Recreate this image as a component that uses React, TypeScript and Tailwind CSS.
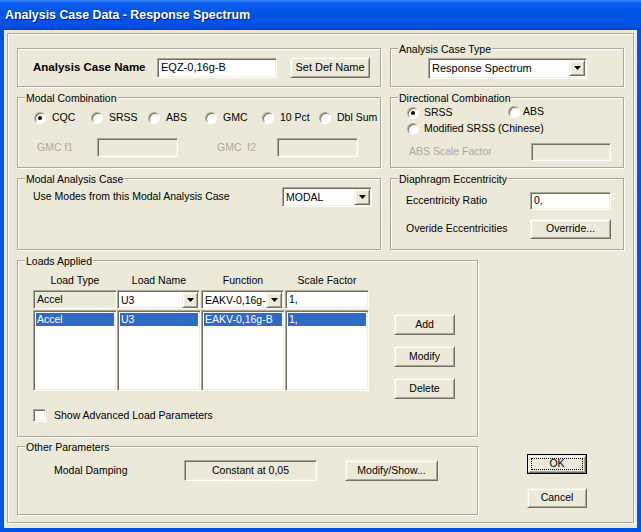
import type { ReactNode } from "react";

const sunken =
  "border border-[#ACA899] border-b-white border-r-white shadow-[inset_1px_1px_0_#716F64,inset_-1px_-1px_0_#F1EFE2]";
const raised =
  "border border-[#F1EFE2] border-b-[#716F64] border-r-[#716F64] shadow-[inset_1px_1px_0_#fff,inset_-1px_-1px_0_#ACA899]";
const etched = "border border-[#ACA899] shadow-[inset_1px_1px_0_#fff,1px_1px_0_#fff]";

function Group({ title, className, children }: { title?: string; className: string; children: ReactNode }) {
  return (
    <div className={`relative ${etched} ${className}`}>
      {title && (
        <span className="absolute left-[7px] top-[-7px] bg-[#ECE9D8] px-[1px] leading-[14px]">{title}</span>
      )}
      {children}
    </div>
  );
}

function Arrow() {
  return (
    <svg width="7" height="4" viewBox="0 0 7 4">
      <polygon points="0,0 7,0 3.5,4" fill="#000" />
    </svg>
  );
}

function Combo({ value, className }: { value: string; className: string }) {
  return (
    <div className={`flex items-center bg-white ${sunken} ${className}`}>
      <span className="flex-1 overflow-hidden whitespace-nowrap pl-[3px] leading-[14px]">{value}</span>
      <span className={`mr-[1px] flex h-[16px] w-[16px] shrink-0 items-center justify-center bg-[#ECE9D8] ${raised}`}>
        <Arrow />
      </span>
    </div>
  );
}

function Field({ value = "", disabled, className }: { value?: string; disabled?: boolean; className: string }) {
  return (
    <div
      className={`flex items-center overflow-hidden whitespace-nowrap pl-[3px] ${sunken} ${
        disabled ? "bg-[#ECE9D8]" : "bg-white"
      } ${className}`}
    >
      {value}
    </div>
  );
}

function Button({ label, className }: { label: string; className: string }) {
  return (
    <div className={`flex items-center justify-center bg-[#ECE9D8] ${raised} ${className}`}>{label}</div>
  );
}

function Radio({ checked }: { checked?: boolean }) {
  return (
    <span className="flex h-[12px] w-[12px] shrink-0 items-center justify-center rounded-full border border-[#ACA899] border-b-white border-r-white bg-white shadow-[inset_1px_1px_0_#716F64]">
      {checked && <span className="h-[4px] w-[4px] rounded-full bg-black" />}
    </span>
  );
}

const modalOptions = ["CQC", "SRSS", "ABS", "GMC", "10 Pct", "Dbl Sum"];

const loadColumns = [
  { head: "Load Type", row: "Accel" },
  { head: "Load Name", row: "U3" },
  { head: "Function", row: "EAKV-0,16g-B" },
  { head: "Scale Factor", row: "1," },
];

export default function App() {
  return (
    <div className="flex h-[532px] w-[641px] flex-col bg-[#0054E3] font-['Liberation_Sans',Arial,sans-serif] text-[10.5px] text-black">
      <div className="flex h-[30px] shrink-0 items-center bg-[linear-gradient(to_bottom,#3D8CF7_0%,#0A5CEE_10%,#0055E5_45%,#0052E0_85%,#0046D2_100%)] pl-[5px]">
        <span className="text-[12.4px] font-bold text-white [text-shadow:1px_1px_0_#0A1883]">
          Analysis Case Data - Response Spectrum
        </span>
      </div>

      <div className="mx-[4px] mb-[4px] flex-1 bg-[#ECE9D8] px-[3px] pb-[5px] pt-[3px]">
        <div className={`h-full ${etched} pl-[9px] pt-[14px]`}>
          {/* top two columns */}
          <div className="grid grid-cols-[364px_234px] grid-rows-[39px_71px_72px] gap-x-[9px] gap-y-[10px]">
            <Group className="flex items-center pl-[15px]">
              <span className="w-[124px] text-[11.5px] font-bold">Analysis Case Name</span>
              <Field value="EQZ-0,16g-B" className="h-[20px] w-[120px] text-[11px]" />
              <Button label="Set Def Name" className="ml-[13px] h-[21px] w-[80px] text-[11px]" />
            </Group>

            <Group title="Analysis Case Type" className="flex items-center pl-[37px] pt-[1px]">
              <Combo value="Response Spectrum" className="h-[21px] w-[159px] text-[11px]" />
            </Group>

            <Group title="Modal Combination" className="pt-[13px]">
              <div className="flex h-[14px] items-center pl-[16px]">
                {modalOptions.map((o, i) => (
                  <div key={o} className="flex w-[57px] shrink-0 items-center gap-[6px]">
                    <Radio checked={i === 0} />
                    <span className="whitespace-nowrap">{o}</span>
                  </div>
                ))}
              </div>
              <div className="mt-[13px] flex h-[19px] items-center pl-[19px] text-[#ACA899]">
                <span className="w-[60px]">GMC f1</span>
                <Field disabled className="h-[19px] w-[81px]" />
                <span className="ml-[39px] w-[60px]">GMC&nbsp; f2</span>
                <Field disabled className="h-[19px] w-[81px]" />
              </div>
            </Group>

            <Group title="Directional Combination" className="pt-[9px]">
              <div className="flex h-[12px] items-center pl-[16px]">
                <div className="flex w-[101px] items-center gap-[5px]">
                  <Radio checked />
                  <span>SRSS</span>
                </div>
                <div className="-mt-[2px] flex items-center gap-[3px]">
                  <Radio />
                  <span>ABS</span>
                </div>
              </div>
              <div className="mt-[4px] flex h-[12px] items-center gap-[5px] pl-[16px]">
                <Radio />
                <span>Modified SRSS (Chinese)</span>
              </div>
              <div className="mt-[8px] flex h-[18px] items-center pl-[18px] text-[#ACA899]">
                <span className="w-[122px]">ABS Scale Factor</span>
                <Field disabled className="h-[18px] w-[80px]" />
              </div>
            </Group>

            <Group title="Modal Analysis Case" className="pt-[8px]">
              <div className="flex h-[20px] items-center pl-[15px]">
                <span className="w-[249px]">Use Modes from this Modal Analysis Case</span>
                <Combo value="MODAL" className="h-[20px] w-[90px]" />
              </div>
            </Group>

            <Group title="Diaphragm Eccentricity" className="pt-[13px]">
              <div className="flex h-[18px] items-center pl-[15px]">
                <span className="w-[124px]">Eccentricity Ratio</span>
                <Field value="0," className="h-[18px] w-[81px]" />
              </div>
              <div className="mt-[9px] flex h-[20px] items-center pl-[15px]">
                <span className="w-[124px]">Overide Eccentricities</span>
                <Button label="Override..." className="h-[20px] w-[81px]" />
              </div>
            </Group>
          </div>

          {/* bottom area */}
          <div className="mt-[10px] flex">
            <div className="flex w-[461px] flex-col gap-[9px]">
              <Group title="Loads Applied" className="h-[177px] pl-[15px] pt-[13px]">
                <div className="grid w-[336px] grid-cols-4">
                  {loadColumns.map((c) => (
                    <span key={c.head} className="h-[13px] text-center leading-[13px]">
                      {c.head}
                    </span>
                  ))}
                </div>
                <div className="mt-[3px] grid w-[336px] grid-cols-4">
                  <Field value="Accel" disabled className="h-[19px] w-[84px]" />
                  <Combo value="U3" className="h-[19px] w-[83px]" />
                  <Combo value="EAKV-0,16g-B" className="h-[19px] w-[83px]" />
                  <Field value="1," className="h-[19px] w-[84px]" />
                </div>
                <div className="mt-[1px] flex h-[81px] items-start">
                  <div className="grid w-[336px] grid-cols-4">
                    {loadColumns.map((c) => (
                      <div key={c.head} className={`h-[81px] bg-white p-[2px] ${sunken}`}>
                        <div className="flex h-[13px] items-center overflow-hidden whitespace-nowrap bg-[#316AC5] pl-[1px] text-white">
                          {c.row}
                        </div>
                      </div>
                    ))}
                  </div>
                  <div className="ml-[25px] flex flex-col gap-[11px] pt-[4px]">
                    <Button label="Add" className="h-[21px] w-[61px]" />
                    <Button label="Modify" className="h-[21px] w-[61px]" />
                    <Button label="Delete" className="h-[21px] w-[61px]" />
                  </div>
                </div>
                <div className="mt-[18px] flex h-[13px] items-center gap-[8px]">
                  <span className={`h-[13px] w-[13px] bg-white ${sunken}`} />
                  <span>Show Advanced Load Parameters</span>
                </div>
              </Group>

              <Group title="Other Parameters" className="h-[69px] pl-[36px] pt-[13px]">
                <div className="flex h-[21px] items-center">
                  <span className="w-[130px]">Modal Damping</span>
                  <div className={`flex h-[21px] w-[133px] items-start justify-center pt-[2px] ${sunken}`}>
                    Constant at 0,05
                  </div>
                  <Button label="Modify/Show..." className="ml-[28px] h-[21px] w-[93px]" />
                </div>
              </Group>
            </div>

            <div className="ml-[49px] flex flex-col gap-[14px] pt-[194px]">
              <div className="h-[20px] w-[60px] border border-black">
                <div className={`flex h-full w-full items-center justify-center bg-[#ECE9D8] p-[2px] ${raised}`}>
                  <div className="flex h-full w-full items-center justify-center border border-dotted border-black">
                    OK
                  </div>
                </div>
              </div>
              <Button label="Cancel" className="h-[20px] w-[60px]" />
            </div>
          </div>
        </div>
      </div>
    </div>
  );
}
